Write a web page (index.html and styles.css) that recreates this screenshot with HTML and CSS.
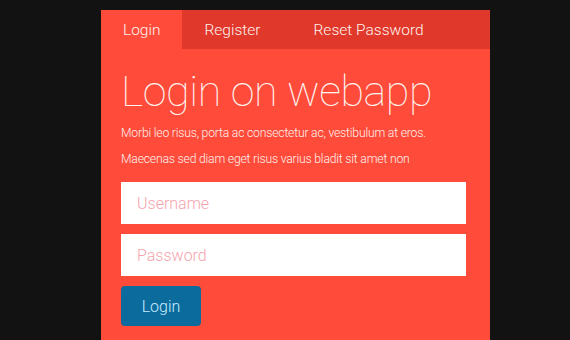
FILE: index.html
```html
<!DOCTYPE html>
<html>
<head>
<meta charset="utf-8">
<link rel="stylesheet" href="styles.css">
</head>
<body>
<div class="panel">
  <nav class="tabs">
    <a class="tab active">Login</a>
    <a class="tab">Register</a>
    <a class="tab reset">Reset Password</a>
  </nav>
  <div class="content">
    <h1 class="title">Login on webapp</h1>
    <p class="text">Morbi leo risus, porta ac consectetur ac, vestibulum at eros.</p>
    <p class="text">Maecenas sed diam eget risus varius bladit sit amet non</p>
    <input class="field" type="text" placeholder="Username">
    <input class="field" type="password" placeholder="Password">
    <button class="btn">Login</button>
  </div>
</div>
</body>
</html>
```
FILE: styles.css
```css
html, body {
  margin: 0;
  padding: 0;
  background: #121212;
  height: 100%;
  overflow: hidden;
  font-family: Roboto, "Liberation Sans", sans-serif;
}
.panel {
  margin: 10px 0 0 101px;
  width: 389px;
  height: 340px;
  background: #fe4b3a;
}
.tabs {
  display: flex;
  height: 39px;
  background: #e0382a;
}
.tab {
  display: flex;
  align-items: center;
  padding: 0 22px;
  font-size: 15.5px;
  font-weight: 300;
  color: #fff1ee;
}
.tab.active {
  background: #fe4b3a;
}
.tab.reset {
  padding-left: 31px;
}
.content {
  padding: 0 24px 0 20px;
  display: flex;
  flex-direction: column;
  align-items: flex-start;
}
.title {
  margin: 14px 0 0 0;
  font-size: 43px;
  font-weight: 100;
  line-height: 56px;
  color: #fff4f0;
  letter-spacing: -0.4px;
}
.text {
  margin: 0;
  font-size: 12.2px;
  font-weight: 300;
  line-height: 26px;
  color: #fff0ec;
  letter-spacing: -0.2px;
}
.text:first-of-type {
  margin-top: 1px;
}
.field {
  box-sizing: border-box;
  width: 345px;
  height: 42px;
  margin: 0 0 10px 0;
  border: none;
  outline: none;
  background: #fff;
  padding: 0 16px;
  font-family: Roboto, "Liberation Sans", sans-serif;
  font-size: 16px;
  font-weight: 300;
}
.field:first-of-type {
  margin-top: 10px;
}
.field::placeholder {
  color: #f6a3ad;
}
.btn {
  width: 80px;
  height: 40px;
  border: none;
  border-radius: 4px;
  background: #0b6b9c;
  color: #c8ebff;
  font-family: Roboto, "Liberation Sans", sans-serif;
  font-size: 16px;
  font-weight: 300;
  padding: 0;
}
```
